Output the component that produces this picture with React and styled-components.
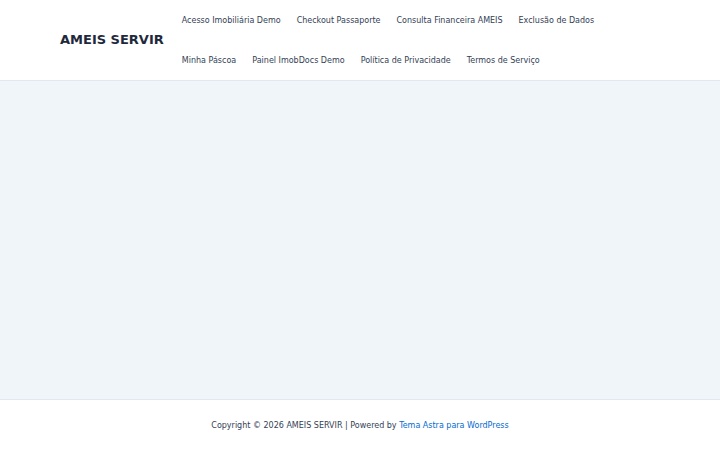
import styled, { createGlobalStyle } from 'styled-components';

const Global = createGlobalStyle`
  html, body { margin: 0; padding: 0; }
  body {
    font-family: "DejaVu Sans", sans-serif;
    background: #ffffff;
    color: #334155;
  }
`;

const Page = styled.div`
  display: flex;
  flex-direction: column;
  height: 450px;
`;

const Header = styled.header`
  background: #ffffff;
  border-bottom: 1px solid #e2e8f0;
`;

const HeaderInner = styled.div`
  width: 600px;
  margin: 0 auto;
  display: flex;
  align-items: center;
  height: 80px;
`;

const Logo = styled.div`
  font-size: 13px;
  font-weight: bold;
  color: #1e293b;
  white-space: nowrap;
  margin-right: 10px;
  margin-bottom: 2px;
`;

const Nav = styled.nav`
  display: flex;
  flex-wrap: wrap;
  flex: 1;
`;

const NavItem = styled.a`
  display: block;
  line-height: 39px;
  padding: 1px 8px 0;
  font-size: 8px;
  color: #334155;
  text-decoration: none;
  white-space: nowrap;
`;

const Content = styled.main`
  flex: 1;
  background: #f0f5fa;
`;

const Footer = styled.footer`
  border-top: 1px solid #e2e8f0;
  height: 50px;
  display: flex;
  align-items: center;
  justify-content: center;
  font-size: 8px;
  color: #334155;
`;

const Link = styled.a`
  color: #046bd2;
  text-decoration: none;
`;

const items = [
  'Acesso Imobiliária Demo',
  'Checkout Passaporte',
  'Consulta Financeira AMEIS',
  'Exclusão de Dados',
  'Minha Páscoa',
  'Painel ImobDocs Demo',
  'Política de Privacidade',
  'Termos de Serviço',
];

export default function App() {
  return (
    <Page>
      <Global />
      <Header>
        <HeaderInner>
          <Logo>AMEIS SERVIR</Logo>
          <Nav>
            {items.map((t) => (
              <NavItem key={t} href="#">{t}</NavItem>
            ))}
          </Nav>
        </HeaderInner>
      </Header>
      <Content />
      <Footer>
        <span>
          Copyright © 2026 AMEIS SERVIR | Powered by <Link href="#">Tema Astra para WordPress</Link>
        </span>
      </Footer>
    </Page>
  );
}
